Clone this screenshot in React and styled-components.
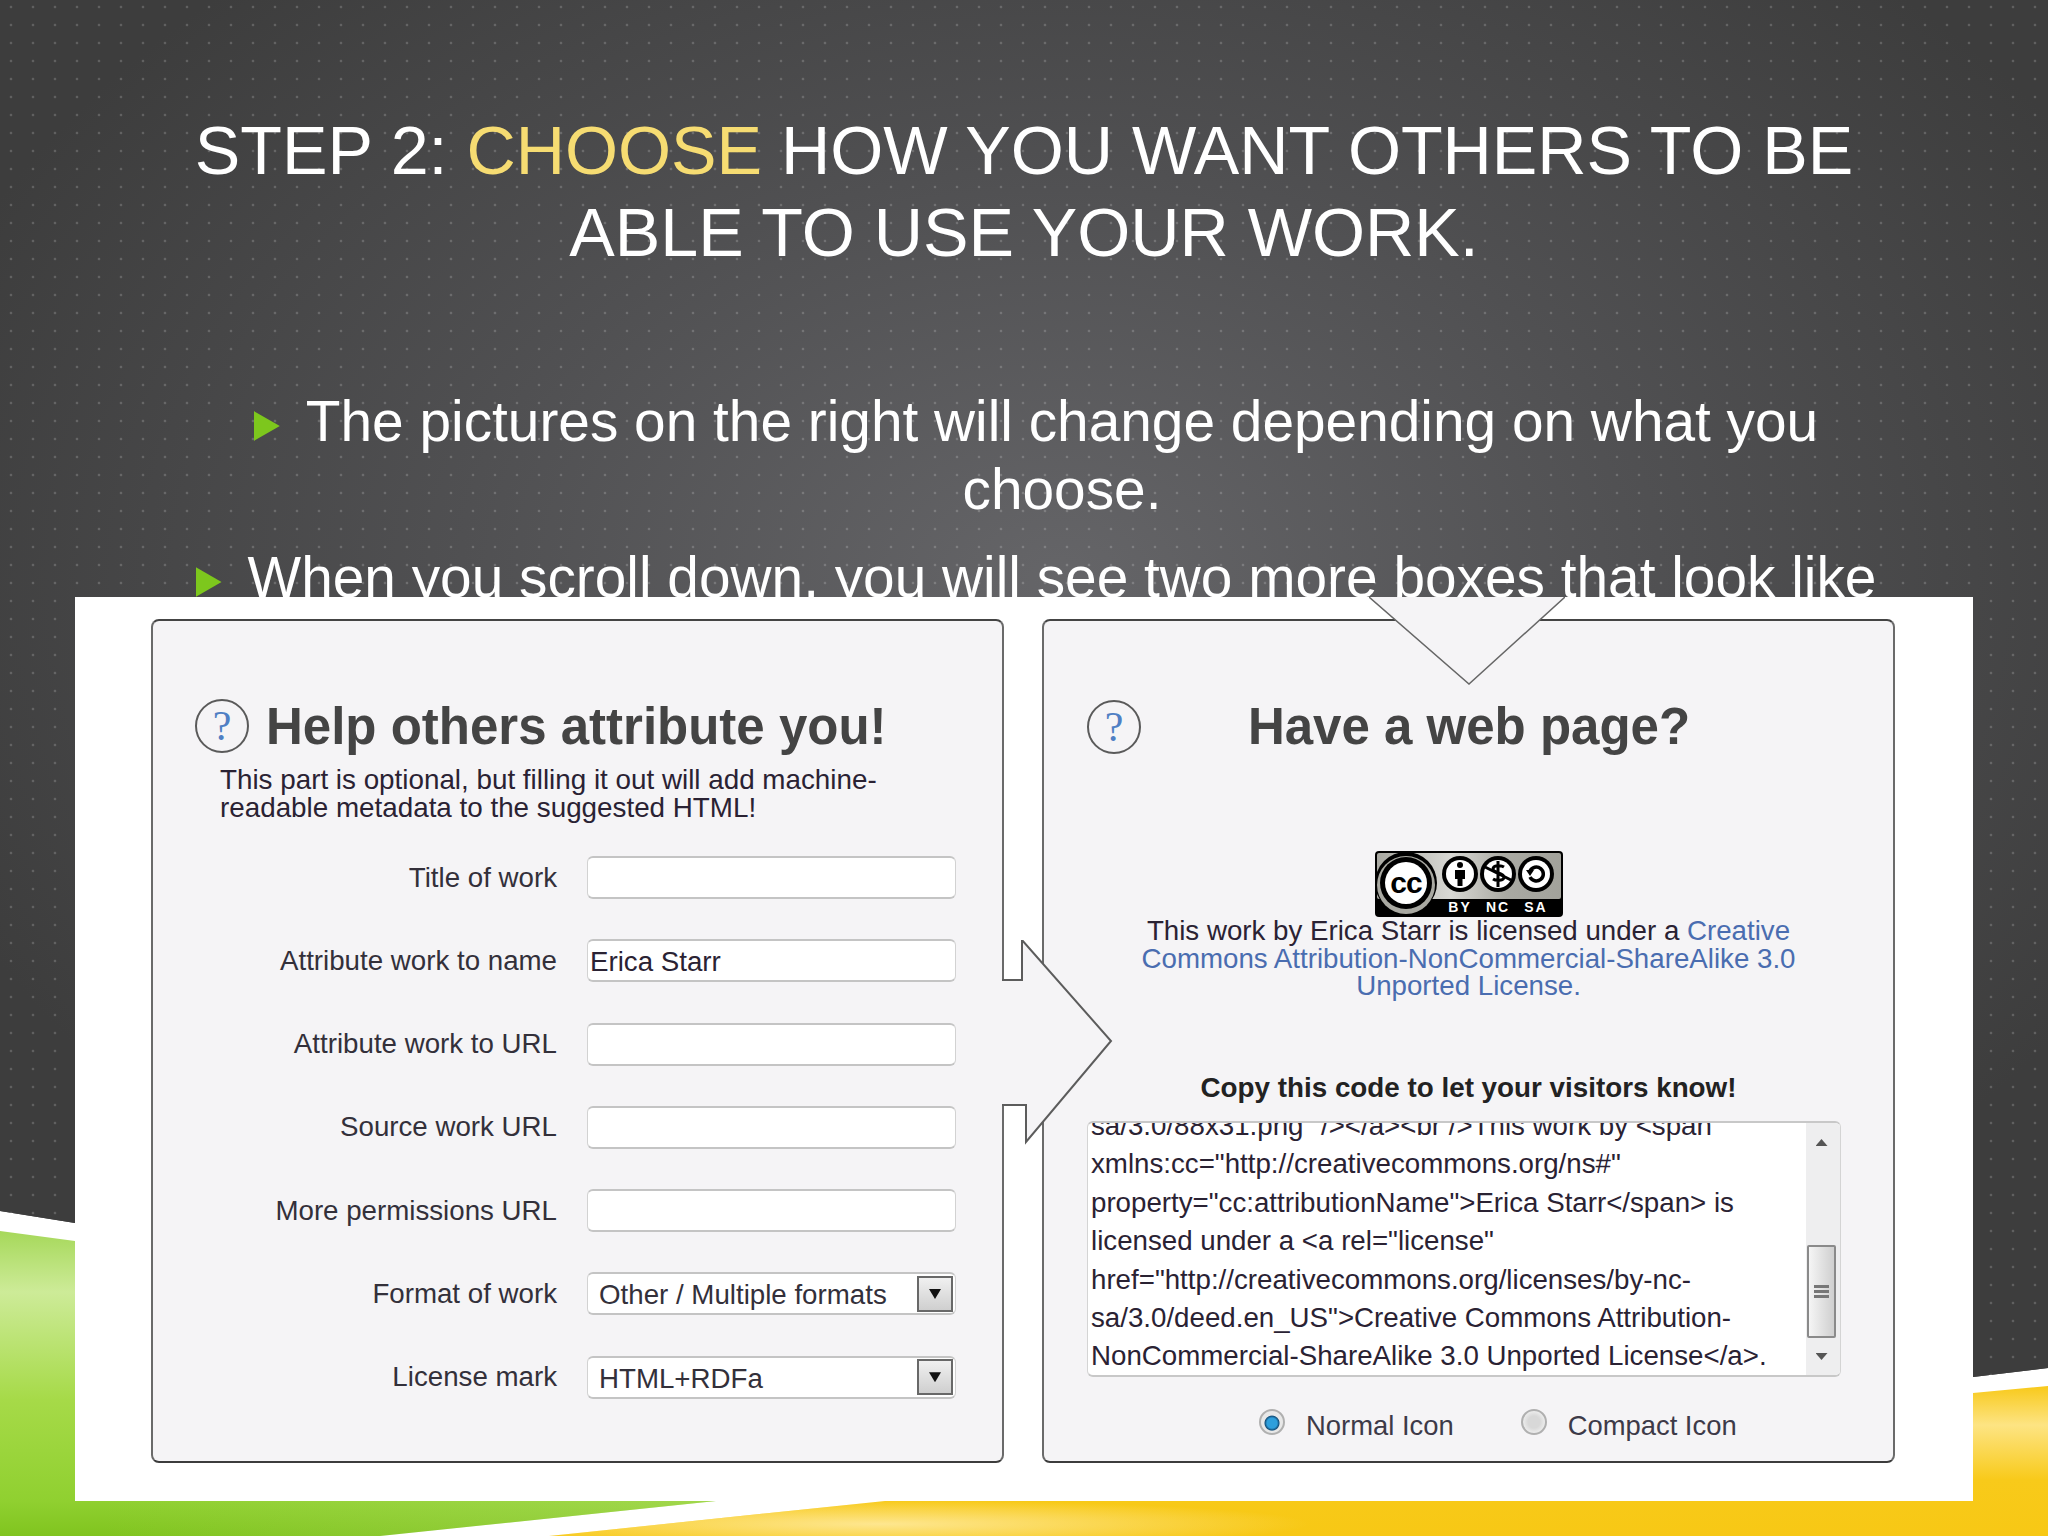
import styled, { createGlobalStyle } from "styled-components"

const GlobalStyle = createGlobalStyle`
  html, body {
    margin: 0;
    padding: 0;
    background: #fff;
  }
  * {
    box-sizing: border-box;
  }
`

const PANEL_BG = "#f5f4f6"
const SANS = `"Liberation Sans", Arial, sans-serif`

const fields = [
  { label: "Title of work", value: "" },
  { label: "Attribute work to name", value: "Erica Starr" },
  { label: "Attribute work to URL", value: "" },
  { label: "Source work URL", value: "" },
  { label: "More permissions URL", value: "" },
]

const selects = [
  { label: "Format of work", value: "Other / Multiple formats" },
  { label: "License mark", value: "HTML+RDFa" },
]

const codeLines = [
  `sa/3.0/88x31.png" /></a><br />This work by <span`,
  `xmlns:cc="http://creativecommons.org/ns#"`,
  `property="cc:attributionName">Erica Starr</span> is`,
  `licensed under a <a rel="license"`,
  `href="http://creativecommons.org/licenses/by-nc-`,
  `sa/3.0/deed.en_US">Creative Commons Attribution-`,
  `NonCommercial-ShareAlike 3.0 Unported License</a>.`,
]

const CcBadge = () => (
  <svg width="188" height="66" viewBox="0 0 188 66" aria-label="CC BY NC SA">
    <defs>
      <linearGradient id="badgeGrey" x1="0" y1="0" x2="1" y2="0">
        <stop offset="0" stopColor="#a9a9a2" />
        <stop offset="0.4" stopColor="#d8d8d4" />
        <stop offset="0.7" stopColor="#aaaaa3" />
        <stop offset="1" stopColor="#a2a29b" />
      </linearGradient>
    </defs>
    <rect x="0" y="0" width="188" height="66" rx="4" fill="#000" />
    <rect x="2" y="2" width="184" height="46" rx="2" fill="url(#badgeGrey)" />
    <circle cx="31" cy="32" r="31" fill="#000" />
    <circle cx="31" cy="34" r="29" fill="#a9a9a2" />
    <circle cx="31" cy="32" r="26" fill="#000" />
    <circle cx="31" cy="32" r="21" fill="#fff" />
    <text x="31" y="42" textAnchor="middle" fontFamily={SANS} fontWeight="700" fontSize="30" letterSpacing="-1" fill="#000">cc</text>

    <circle cx="85" cy="23" r="18" fill="#000" />
    <circle cx="85" cy="23" r="14" fill="#fff" />
    <circle cx="85" cy="14" r="3" fill="#000" />
    <path d="M80 19h10v9h-2.5v7h-5v-7H80z" fill="#000" />

    <circle cx="123" cy="23" r="18" fill="#000" />
    <circle cx="123" cy="23" r="14" fill="#fff" />
    <path d="M129 16c-3-2-11-2-11 2s11 4 11 8-8 4-11 2M123 10v26M110 16l26 13" fill="none" stroke="#000" strokeWidth="3" />

    <circle cx="161" cy="23" r="18" fill="#000" />
    <circle cx="161" cy="23" r="14" fill="#fff" />
    <path d="M155 20a7 7 0 1 1 0 6" fill="none" stroke="#000" strokeWidth="3.5" />
    <path d="M151 19l8 0-4 6z" fill="#000" />

    <text x="85" y="61" textAnchor="middle" fontFamily={SANS} fontWeight="700" fontSize="14" letterSpacing="2" fill="#fff">BY</text>
    <text x="123" y="61" textAnchor="middle" fontFamily={SANS} fontWeight="700" fontSize="14" letterSpacing="2" fill="#fff">NC</text>
    <text x="161" y="61" textAnchor="middle" fontFamily={SANS} fontWeight="700" fontSize="14" letterSpacing="2" fill="#fff">SA</text>
  </svg>
)

export default function App() {
  return (
    <>
      <GlobalStyle />
      <Slide>
        <DarkBackdrop />
        <GreenCorner />
        <YellowCorner />

        <Title>
          STEP 2: <Accent>CHOOSE</Accent> HOW YOU WANT OTHERS TO BE ABLE TO USE YOUR WORK.
        </Title>

        <Bullets>
          <Bullet>
            <BulletMark />
            The pictures on the right will change depending on what you choose.
          </Bullet>
          <Bullet>
            <BulletMark />
            When you scroll down, you will see two more boxes that look like this:
          </Bullet>
        </Bullets>

        <Screenshot>
          <Panel>
            <HeadingRow>
              <HelpIcon>?</HelpIcon>
              <PanelHeading>Help others attribute you!</PanelHeading>
            </HeadingRow>
            <Intro>This part is optional, but filling it out will add machine-readable metadata to the suggested HTML!</Intro>
            <Form>
              {fields.map((field) => (
                <FieldRow key={field.label}>
                  <FieldLabel>{field.label}</FieldLabel>
                  <TextInput readOnly value={field.value} />
                </FieldRow>
              ))}
              {selects.map((field) => (
                <FieldRow key={field.label}>
                  <FieldLabel>{field.label}</FieldLabel>
                  <SelectBox>
                    <SelectValue>{field.value}</SelectValue>
                    <SelectButton><DownGlyph /></SelectButton>
                  </SelectBox>
                </FieldRow>
              ))}
            </Form>
          </Panel>

          <Panel>
            <CenteredHeadingRow>
              <HelpIcon>?</HelpIcon>
              <PanelHeading>Have a web page?</PanelHeading>
            </CenteredHeadingRow>
            <BadgeWrap>
              <CcBadge />
            </BadgeWrap>
            <LicenseText>
              This work by Erica Starr is licensed under a <LicenseLink>Creative Commons Attribution-NonCommercial-ShareAlike 3.0 Unported License.</LicenseLink>
            </LicenseText>
            <CopyHeading>Copy this code to let your visitors know!</CopyHeading>
            <CodeBox>
              <CodeText>
                {codeLines.map((line) => (
                  <CodeLine key={line}>{line}</CodeLine>
                ))}
              </CodeText>
              <ScrollTrack>
                <ScrollEnd><ScrollUpGlyph /></ScrollEnd>
                <ScrollThumb>
                  <Grip />
                  <Grip />
                  <Grip />
                </ScrollThumb>
                <ScrollEnd $bottom><ScrollDownGlyph /></ScrollEnd>
              </ScrollTrack>
            </CodeBox>
            <RadioRow>
              <Radio $checked />
              <RadioLabel>Normal Icon</RadioLabel>
              <Radio />
              <RadioLabel>Compact Icon</RadioLabel>
            </RadioRow>
          </Panel>

          <ArrowRight width="114" height="206" viewBox="0 0 114 206">
            <polygon points="0,40 22,40 22,0 111,101 26,202 26,165 0,165" fill={PANEL_BG} />
            <polyline points="2,40 22,40 22,0 111,101 26,202 26,165 2,165" fill="none" stroke="#5c5c5c" strokeWidth="2" />
          </ArrowRight>
          <ArrowDown width="196" height="90" viewBox="0 0 196 90">
            <polygon points="0,0 196,0 100,87" fill={PANEL_BG} />
            <polyline points="0,0 100,87 196,0" fill="none" stroke="#666" strokeWidth="1.5" />
          </ArrowDown>
        </Screenshot>
      </Slide>
    </>
  )
}

const Slide = styled.div`
  position: relative;
  width: 2048px;
  height: 1536px;
  padding-top: 109px;
  overflow: hidden;
  background: #fff;
  font-family: ${SANS};
`

const DarkBackdrop = styled.div`
  position: absolute;
  inset: 0;
  clip-path: polygon(0 0, 2048px 0, 2048px 1368px, 1973px 1377px, 1000px 1500px, 75px 1223px, 0 1211px);
  background-color: #3d3d3d;
  background-image:
    radial-gradient(circle, rgba(255, 255, 255, 0.18) 1px, transparent 1.7px),
    radial-gradient(ellipse 1200px 820px at 1060px 580px, #656568 0%, #505052 50%, #3d3d3d 100%);
  background-size: 22px 18px, 100% 100%;
  background-position: 0 -2px, 0 0;
`

const GreenCorner = styled.div`
  position: absolute;
  inset: 0;
  clip-path: polygon(0 1231px, 75px 1241px, 800px 1480px, 716px 1501px, 380px 1536px, 0 1536px);
  background:
    linear-gradient(90deg, rgba(200, 232, 140, 0) 100px, rgba(200, 232, 140, 0.3) 720px),
    linear-gradient(180deg, #a6d85a 1231px, #cdeb98 1292px, #a6da48 1400px, #90d030 1501px, #80c41f 1536px);
`

const YellowCorner = styled.div`
  position: absolute;
  inset: 0;
  clip-path: polygon(2048px 1386px, 1973px 1393px, 1200px 1480px, 885px 1501px, 549px 1536px, 2048px 1536px);
  background:
    radial-gradient(ellipse 430px 24px at 880px 1524px, rgba(254, 232, 150, 0.95), rgba(254, 232, 150, 0)),
    linear-gradient(180deg, #f8c91a 1386px, #fde483 1425px, #f8ca1a 1480px, #f7c815 1536px);
`

const Title = styled.h1`
  position: relative;
  width: 1720px;
  margin: 0 auto;
  color: #fff;
  font-size: 68.2px;
  font-weight: 400;
  line-height: 82px;
  text-align: center;
`

const Accent = styled.span`
  color: #f6dc72;
`

const Bullets = styled.ul`
  position: relative;
  width: 1650px;
  margin: 115px 0 0 237px;
  padding: 0;
  list-style: none;
`

const Bullet = styled.li`
  margin-bottom: 20px;
  color: #fff;
  font-size: 56.8px;
  line-height: 68px;
  text-align: center;
`

const BulletMark = styled.span`
  display: inline-block;
  width: 26px;
  height: 30px;
  margin-left: -52px;
  margin-right: 26px;
  background: #7dc71d;
  clip-path: polygon(0 0, 100% 50%, 0 100%);
`

const Screenshot = styled.div`
  position: absolute;
  left: 75px;
  top: 597px;
  display: flex;
  gap: 38px;
  width: 1898px;
  height: 904px;
  padding: 22px 78px 0 76px;
  background: #fff;
`

const Panel = styled.div`
  display: flex;
  flex-direction: column;
  width: 853px;
  height: 844px;
  padding: 78px 42px 0;
  background: ${PANEL_BG};
  border: 2px solid #6a6a6a;
  border-top-color: #444;
  border-bottom-color: #3c3c3c;
  border-radius: 8px;
`

const HeadingRow = styled.div`
  display: flex;
  align-items: center;
  gap: 17px;
  height: 54px;
`

const CenteredHeadingRow = styled(HeadingRow)`
  display: grid;
  grid-template-columns: 54px 1fr 54px;
  gap: 0;
  text-align: center;
  margin-left: 1px;
`

const HelpIcon = styled.div`
  display: flex;
  align-items: center;
  justify-content: center;
  width: 54px;
  height: 54px;
  border: 2px solid #5a5a5a;
  border-radius: 50%;
  color: #4f7fc4;
  font-family: "Liberation Serif", serif;
  font-size: 42px;
  line-height: 1;
`

const PanelHeading = styled.h2`
  margin: 1px 0 0;
  color: #444;
  font-size: 51px;
  font-weight: 700;
  line-height: 54px;
  white-space: nowrap;
`

const Intro = styled.p`
  width: 680px;
  margin: 13px 0 0 25px;
  color: #2a2233;
  font-size: 27.8px;
  line-height: 27.5px;
`

const Form = styled.div`
  display: flex;
  flex-direction: column;
  gap: 40.3px;
  margin-top: 35px;
`

const FieldRow = styled.div`
  display: flex;
  align-items: center;
  gap: 30px;
  height: 43px;
`

const FieldLabel = styled.label`
  width: 362px;
  color: #33303a;
  font-size: 27.7px;
  text-align: right;
  white-space: nowrap;
`

const TextInput = styled.input`
  width: 369px;
  height: 43px;
  padding: 3px 2px 0;
  background: #fff;
  border: 1px solid #d2d2d2;
  border-top: 2px solid #c4c4c4;
  border-bottom: 2px solid #c4c4c4;
  border-radius: 6px;
  color: #2a2233;
  font-family: ${SANS};
  font-size: 27.7px;
  outline: none;
`

const SelectBox = styled.div`
  display: flex;
  align-items: center;
  justify-content: space-between;
  width: 369px;
  height: 43px;
  padding: 0 2px 0 11px;
  background: #fff;
  border: 1px solid #d2d2d2;
  border-top: 2px solid #c4c4c4;
  border-bottom: 2px solid #c4c4c4;
  border-radius: 6px;
`

const SelectValue = styled.span`
  margin-top: 3px;
  color: #33303a;
  font-size: 27.7px;
  white-space: nowrap;
`

const SelectButton = styled.span`
  display: flex;
  align-items: center;
  justify-content: center;
  width: 36px;
  height: 36px;
  background: linear-gradient(180deg, #f0f0f0, #cfcfcf);
  border: 2px solid #686868;
`

const DownGlyph = styled.span`
  display: block;
  width: 12px;
  height: 10px;
  background: #111;
  clip-path: polygon(0 0, 100% 0, 50% 100%);
`

const ScrollDownGlyph = styled(DownGlyph)`
  height: 7px;
  background: #555;
`

const ScrollUpGlyph = styled(ScrollDownGlyph)`
  clip-path: polygon(50% 0, 100% 100%, 0 100%);
`

const BadgeWrap = styled.div`
  display: flex;
  justify-content: center;
  height: 66px;
  margin-top: 98px;
`

const LicenseText = styled.p`
  width: 700px;
  margin: 0 auto;
  color: #2a2233;
  font-size: 27.7px;
  line-height: 27.5px;
  text-align: center;
`

const LicenseLink = styled.span`
  color: #4a6db0;
`

const CopyHeading = styled.h3`
  margin: 74px 0 0;
  color: #222;
  font-size: 27.8px;
  font-weight: 700;
  line-height: 27.5px;
  text-align: center;
`

const CodeBox = styled.div`
  display: flex;
  flex-shrink: 0;
  width: 754px;
  height: 256px;
  margin: 20px 0 0 1px;
  overflow: hidden;
  background: #fff;
  border: 1px solid #d4d4d4;
  border-top: 2px solid #c8c8c8;
  border-bottom: 2px solid #c8c8c8;
  border-radius: 6px;
`

const CodeText = styled.div`
  flex: 1;
  padding: 0 0 0 3px;
  margin-top: -16px;
  color: #2a2233;
  font-size: 27.7px;
  line-height: 38.4px;
  white-space: nowrap;
`

const CodeLine = styled.div`
  height: 38.4px;
`

const ScrollTrack = styled.div`
  display: flex;
  flex-direction: column;
  flex-shrink: 0;
  width: 34px;
  height: 100%;
  padding: 0 4px 0 1px;
  background: #eeeeef;
`

const ScrollEnd = styled.div`
  display: flex;
  align-items: ${(props) => (props.$bottom ? "center" : "flex-start")};
  justify-content: center;
  flex: ${(props) => (props.$bottom ? "1" : "0 0 122px")};
  padding-top: ${(props) => (props.$bottom ? "0" : "16px")};
`

const ScrollThumb = styled.div`
  display: flex;
  flex-direction: column;
  align-items: center;
  justify-content: center;
  gap: 2px;
  height: 93px;
  background: linear-gradient(90deg, #f5f5f5, #cfcfcf);
  border: 2px solid #8a8a8a;
  border-radius: 2px;
`

const Grip = styled.span`
  width: 15px;
  height: 3px;
  background: #777;
`

const RadioRow = styled.div`
  display: flex;
  align-items: center;
  height: 32px;
  margin: 33px 0 0 173px;
`

const Radio = styled.span`
  flex-shrink: 0;
  width: 26px;
  height: 26px;
  margin-bottom: 8px;
  border: 2px solid #b0b0b0;
  border-radius: 50%;
  background: ${(props) => (props.$checked
    ? "radial-gradient(circle at 50% 55%, #2e9fdc 0 5px, #14507c 7px, #e8e8e8 8px)"
    : "radial-gradient(circle, #d8d8d8 0 6px, #ececec 11px)")};
`

const RadioLabel = styled.span`
  margin: 0 67px 0 21px;
  color: #3d3a48;
  font-size: 27.4px;
  white-space: nowrap;
`

const ArrowRight = styled.svg`
  position: absolute;
  left: 925px;
  top: 343px;
`

const ArrowDown = styled.svg`
  position: absolute;
  left: 1294px;
  top: 0;
`
